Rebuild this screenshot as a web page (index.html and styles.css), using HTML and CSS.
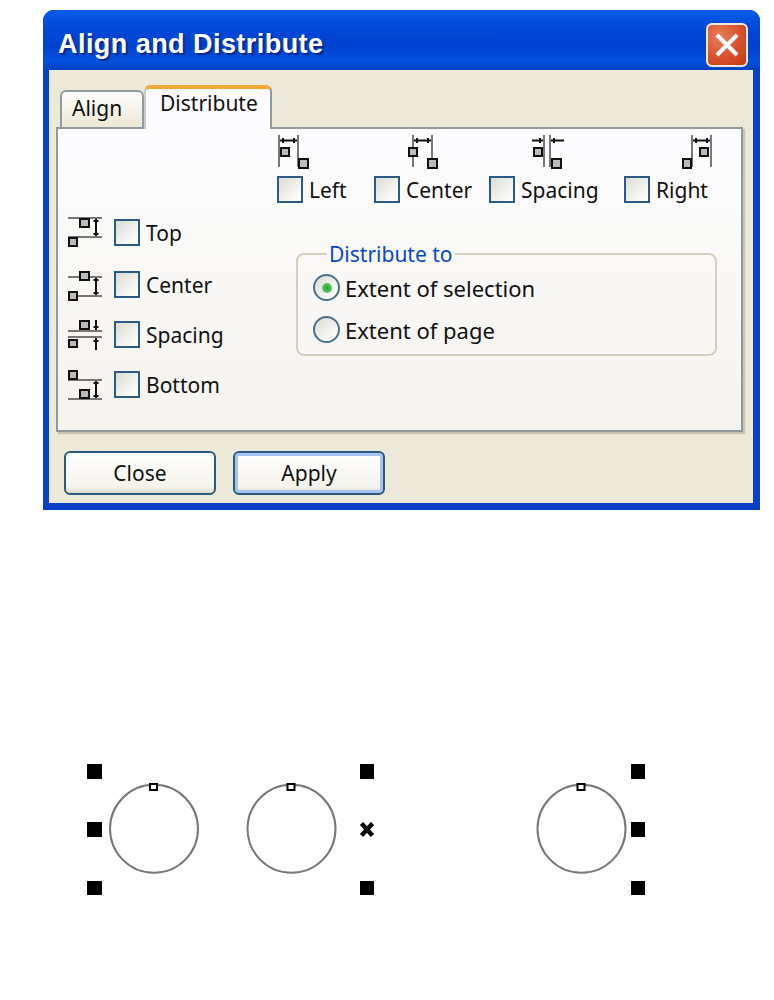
FILE: index.html
```html
<!DOCTYPE html>
<html lang="en">
<head>
  <meta charset="UTF-8" />
  <title>Align and Distribute</title>
  <link rel="stylesheet" href="styles.css">
</head>
<body>
  <div class="dialog">
    <div class="titlebar">
      <span class="title">Align and Distribute</span>
      <button class="close-x" type="button" aria-label="Close">
        <svg width="26" height="26" viewBox="0 0 26 26"><path d="M3 3 L23 23 M23 3 L3 23" stroke="#fff" stroke-width="4"/></svg>
      </button>
    </div>
    <div class="client">
      <div class="tabs">
        <div class="tab">Align</div>
        <div class="tab tab-active">Distribute</div>
      </div>
      <div class="panel">
        <div class="h-options">
          <div class="h-option">
            <svg class="h-icon h-icon-left" width="32" height="34" viewBox="0 0 32 34">
              <path class="line" d="M1 0V32M20 0V32"/><path class="arrow" d="M2 5.5H19M5 3V8M16 3V8"/>
              <rect class="node" x="3" y="13" width="8" height="8"/><rect class="node" x="21" y="24" width="9" height="9"/>
            </svg>
            <label class="check"><span class="box"></span>Left</label>
          </div>
          <div class="h-option">
            <svg class="h-icon h-icon-center" width="32" height="34" viewBox="0 0 32 34">
              <path class="line" d="M5 0V32M24 0V32"/><path class="arrow" d="M6 5.5H23M9 3V8M20 3V8"/>
              <rect class="node" x="1" y="13" width="8" height="8"/><rect class="node" x="20" y="24" width="9" height="9"/>
            </svg>
            <label class="check"><span class="box"></span>Center</label>
          </div>
          <div class="h-option">
            <svg class="h-icon h-icon-spacing" width="34" height="34" viewBox="0 0 34 34">
              <path class="line" d="M13 0V32M19 0V32"/><path class="arrow" d="M1 5.5H12M9 3V8M20 5.5H33M23 3V8"/>
              <rect class="node" x="3" y="13" width="8" height="8"/><rect class="node" x="21" y="24" width="9" height="9"/>
            </svg>
            <label class="check"><span class="box"></span>Spacing</label>
          </div>
          <div class="h-option">
            <svg class="h-icon h-icon-right" width="32" height="34" viewBox="0 0 32 34">
              <path class="line" d="M11 0V32M30 0V32"/><path class="arrow" d="M12 5.5H29M15 3V8M26 3V8"/>
              <rect class="node" x="19" y="13" width="8" height="8"/><rect class="node" x="2" y="24" width="8" height="9"/>
            </svg>
            <label class="check"><span class="box"></span>Right</label>
          </div>
        </div>
        <div class="lower">
          <div class="v-options">
            <div class="v-option">
              <svg width="34" height="32" viewBox="0 0 34 32">
                <path class="line" d="M0 1H34M0 20H34"/><path class="arrow" d="M28 2V19M25.5 4H30.5M25.5 17H30.5"/>
                <rect class="node" x="12" y="2" width="9" height="8"/><rect class="node" x="1" y="21" width="8" height="8"/>
              </svg>
              <label class="check"><span class="box"></span>Top</label>
            </div>
            <div class="v-option">
              <svg width="34" height="32" viewBox="0 0 34 32">
                <path class="line" d="M0 8H34M0 27H34"/><path class="arrow" d="M28 9V26M25.5 11H30.5M25.5 24H30.5"/>
                <rect class="node" x="12" y="3" width="9" height="8"/><rect class="node" x="1" y="23" width="8" height="8"/>
              </svg>
              <label class="check"><span class="box"></span>Center</label>
            </div>
            <div class="v-option">
              <svg width="34" height="32" viewBox="0 0 34 32">
                <path class="line" d="M0 12H34M0 18H34"/><path class="arrow" d="M28 1V11M25.5 8H30.5M28 19V31M25.5 22H30.5"/>
                <rect class="node" x="12" y="2" width="9" height="8"/><rect class="node" x="1" y="21" width="8" height="7"/>
              </svg>
              <label class="check"><span class="box"></span>Spacing</label>
            </div>
            <div class="v-option">
              <svg width="34" height="32" viewBox="0 0 34 32">
                <path class="line" d="M0 11H34M0 30H34"/><path class="arrow" d="M28 12V29M25.5 14H30.5M25.5 27H30.5"/>
                <rect class="node" x="1" y="2" width="8" height="8"/><rect class="node" x="12" y="21" width="9" height="8"/>
              </svg>
              <label class="check"><span class="box"></span>Bottom</label>
            </div>
          </div>
          <fieldset class="group">
            <legend>Distribute to</legend>
            <label class="radio"><span class="dot dot-on"></span>Extent of selection</label>
            <label class="radio"><span class="dot"></span>Extent of page</label>
          </fieldset>
        </div>
      </div>
      <div class="actions">
        <button class="btn" type="button">Close</button>
        <button class="btn btn-default" type="button">Apply</button>
      </div>
    </div>
  </div>

  <!-- objects on the drawing page -->
  <svg class="canvas" width="774" height="490" viewBox="0 0 774 490">
    <g class="handles">
      <rect x="87" y="254" width="15" height="15"/><rect x="87" y="312" width="15" height="15"/><rect x="87" y="371" width="15" height="14"/>
      <rect x="360" y="254" width="14" height="15"/><rect x="360" y="371" width="14" height="14"/>
      <rect x="631" y="254" width="14" height="15"/><rect x="631" y="312" width="14" height="15"/><rect x="631" y="371" width="14" height="14"/>
    </g>
    <path class="cross" d="M361.500 313.500 L372.500 325.500 M372.500 313.500 L361.500 325.500"/>
    <circle class="shape" cx="154" cy="318.800" r="44"/>
    <circle class="shape" cx="291.500" cy="318.800" r="44"/>
    <circle class="shape" cx="581.500" cy="318.800" r="44"/>
    <rect class="start" x="150" y="274" width="7" height="6"/>
    <rect class="start" x="287.500" y="274" width="7" height="6"/>
    <rect class="start" x="577.500" y="274" width="7" height="6"/>
  </svg>
</body>
</html>
```

FILE: styles.css
```css
body { margin: 0; background: #fff; font-family: "Noto Sans", "DejaVu Sans", sans-serif; font-size: 21px; color: #111; }

.dialog { width: 717px; height: 500px; margin: 10px 0 0 43px; padding: 0 7px 7px 6px; box-sizing: border-box; display: flex; flex-direction: column; background: #0a3fc8; border-radius: 11px 11px 0 0; }
.titlebar { height: 60px; flex: none; margin: 0 -7px 0 -6px; padding: 9px 12px 0 15px; box-sizing: border-box; display: flex; align-items: center; justify-content: space-between; border-radius: 11px 11px 0 0; background: linear-gradient(#0a5ce4 0, #0455e4 12%, #0048d8 30%, #0042d0 62%, #0450de 85%, #0440c0 100%); }
.title { margin-top: -1px; color: #fff; font-family: "Liberation Sans", Arial, sans-serif; font-weight: bold; font-size: 27px; letter-spacing: .45px; text-shadow: 2px 2px 1px #0a2a8c; }
.close-x { width: 42px; height: 44px; padding: 0; display: flex; align-items: center; justify-content: center; border: 2px solid #f4e8e0; border-radius: 6px; background: radial-gradient(circle at 30% 30%, #e8805c, #d8502c 55%, #c43a10); }

.client { flex: 1; background: #ece9d8; padding: 15px 10px 0 7px; }

.tabs { display: flex; align-items: flex-end; height: 42px; padding-left: 4px; }
.tab { width: 84px; height: 37px; box-sizing: border-box; padding: 2px 0 0 10px; border: 2px solid #919b9c; border-bottom: none; border-radius: 6px 6px 0 0; background: linear-gradient(#fff, #ece9d8 90%); }
.tab-active { width: 128px; height: 44px; margin-bottom: -2px; position: relative; z-index: 1; padding: 0 0 0 14px; background: #fcfcfe; border-top: 4px solid #f0a838; border-left: 2px solid #c8ccc8; border-right: 2px solid #919b9c; }

.panel { height: 305px; box-sizing: border-box; border: 2px solid #919b9c; border-right-color: #8f9899; border-bottom-color: #8f9899; box-shadow: 2px 2px 1px #c8c6b8; background: linear-gradient(#fcfcfe, #f4f3ee); padding-top: 6px; }

.h-options { display: grid; grid-template-columns: 97px 115px 135px 1fr; padding-left: 219px; }
.h-icon { display: block; margin-bottom: 7px; }
.h-icon-left { margin-left: 1px; }
.h-icon-center { margin-left: 34px; }
.h-icon-spacing { margin-left: 42px; }
.h-icon-right { margin-left: 57px; }

.line { fill: none; stroke: #777; stroke-width: 2; }
.arrow { fill: none; stroke: #111; stroke-width: 2; }
.node { fill: #bbb; stroke: #111; stroke-width: 2; }

.check { display: flex; align-items: center; height: 27px; gap: 6px; }
.box { width: 22px; height: 23px; flex: none; border: 2px solid #2b5a82; background: linear-gradient(135deg, #dcdcd4, #fcfcfa 85%); }

.lower { display: flex; margin-top: 16px; }
.v-options { padding-left: 10px; width: 238px; box-sizing: border-box; display: flex; flex-direction: column; gap: 23px; }
.v-option { display: flex; align-items: center; gap: 12px; height: 27px; }
.v-option:first-child { margin-bottom: 2px; }
.v-option svg { margin-top: 1px; }

.group { width: 421px; height: 114px; box-sizing: border-box; margin: 23px 0 0 0; padding: 8px 0 0 15px; border: 2px solid #d0d0bf; border-radius: 8px; }
.group legend { color: #0a46c8; padding: 0 2px; margin-left: 14px; line-height: 24px; }
.radio { display: flex; align-items: center; height: 27px; gap: 5px; margin-bottom: 15px; font-size: 22px; }
.dot { width: 23px; height: 23px; flex: none; display: flex; align-items: center; justify-content: center; border: 2px solid #4c6f8c; border-radius: 50%; background: linear-gradient(135deg, #dcdcd4, #fcfcfa 85%); }
.dot-on::after { content: ""; width: 10px; height: 10px; border-radius: 50%; background: radial-gradient(circle, #1fa82c, #7cd486); }

.actions { display: flex; gap: 17px; padding: 19px 0 0 8px; }
.btn { width: 152px; height: 44px; padding: 0; font: inherit; color: #111; border: 2px solid #2c5a7e; border-radius: 6px; background: linear-gradient(#fff, #f4f3ec 85%, #dcd8c8); }
.btn-default { box-shadow: inset 0 0 0 3px #a8c4ee; }

.canvas { display: block; }
.handles rect { fill: #000; }
.cross { fill: none; stroke: #000; stroke-width: 4.500; }
.shape { fill: none; stroke: #777; stroke-width: 2; }
.start { fill: #fff; stroke: #000; stroke-width: 2; }
```
